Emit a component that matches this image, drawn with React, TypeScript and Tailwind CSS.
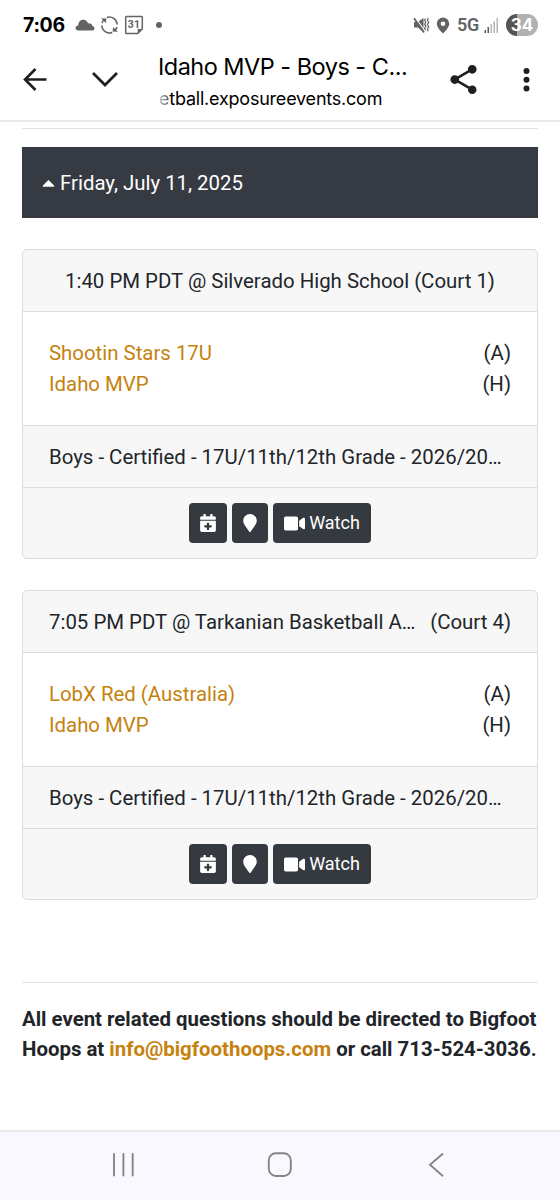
import type { ReactNode } from 'react';
import { FaCalendarPlus, FaCaretUp, FaMapMarker, FaVideo } from 'react-icons/fa';
import { MdShare } from 'react-icons/md';

type Game = {
    venue: string;
    court: string;
    away: string;
    home: string;
    centered?: boolean;
};

const division = 'Boys - Certified - 17U/11th/12th Grade - 2026/20…';

const games: Game[] = [
    {
        venue: '1:40 PM PDT @ Silverado High School',
        court: '(Court 1)',
        away: 'Shootin Stars 17U',
        home: 'Idaho MVP',
        centered: true,
    },
    {
        venue: '7:05 PM PDT @ Tarkanian Basketball A…',
        court: '(Court 4)',
        away: 'LobX Red (Australia)',
        home: 'Idaho MVP',
    },
];

function StatusBar() {
    return (
        <div className="flex h-[50px] items-center justify-between pl-[23px] pr-[22px] text-[#636363]">
            <div className="flex items-center">
                <span className="w-[43px] whitespace-nowrap font-['Inter',sans-serif] text-[19.5px] font-bold tracking-[-0.3px] text-black">7:06</span>
                <svg className="ml-[9px]" width="20" height="12" viewBox="0 0 20 12" fill="currentColor">
                    <path d="M3.6 11.5C1.6 11.5.5 10.5.5 9c0-1.600 1.100-2.500 2.700-2.600C3.500 2.900 5.500.800 8.300.800c2.300 0 3.900 1.300 4.700 3.400 2.600-.400 4.100 1 4.300 2.900 1.300.200 2.200 1 2.200 2.200 0 1.400-1 2.200-2.400 2.200Z" />
                </svg>
                {/* Sync */}
                <svg className="ml-[5px]" width="19" height="20" viewBox="0 0 19 20" fill="none" stroke="currentColor" strokeWidth="1.500">
                    <path d="M6.800 2.500A7.800 7.800 0 0 1 17.200 9.500M1.800 10.500A7.800 7.800 0 0 0 12.200 17.500M2 8A7.800 7.800 0 0 1 4.300 4.200M17 12A7.800 7.800 0 0 1 14.700 15.800" />
                    <path d="M1.200 3.300 6.500 3.600 5.800 8ZM17.800 16.700l-5.300-.3.700-4.400Z" fill="currentColor" stroke="none" />
                </svg>
                <svg className="ml-[5px]" width="20" height="20" viewBox="0 0 20 20" fill="none" stroke="currentColor" strokeWidth="1.500">
                    <path d="M2.500 1.500h15a.8.8 0 0 1 .8.8v11.700l-4.600 4.500H2.500a.8.8 0 0 1-.8-.8V2.300a.8.8 0 0 1 .8-.8Z" />
                    <path d="M13.700 18.500V14h4.600Z" fill="currentColor" stroke="none" />
                    <text x="9.900" y="13.300" textAnchor="middle" fontFamily="Roboto, sans-serif" fontSize="10.500" fontWeight="700" fill="currentColor" stroke="none">31</text>
                </svg>
                <span className="ml-[12px] size-[6px] rounded-full bg-[#636363]" />
            </div>
            <div className="flex items-center">
                <svg width="17" height="18" viewBox="0 0 17 18" fill="none" stroke="currentColor" strokeWidth="1.200">
                    <path d="M1 6h3.800L10.500 2v14L4.800 11.500H1Z" fill="currentColor" stroke="none" />
                    <path d="M2.200 1.500 12 15" stroke="white" strokeWidth="1.200" />
                    <path d="M1 2.200 11 16.500" strokeWidth="1.800" />
                    <path d="m12.500 2.500-.9 1.700 1.300 2-1.300 2 1.300 2-1.300 2 .9 2M15.300 2l-.9 2 1.300 2.300-1.300 2.300 1.300 2.300-1.300 2.300.9 2" />
                </svg>
                <svg className="ml-[6px]" width="14" height="17" viewBox="0 0 14 17" fill="currentColor">
                    <path fillRule="evenodd" d="M7 .5a6.200 6.200 0 0 1 6.200 6.200C13.200 11 7 16.500 7 16.500S.8 11 .8 6.700A6.200 6.200 0 0 1 7 .5Zm0 4a2.300 2.300 0 1 0 0 4.600 2.300 2.300 0 0 0 0-4.600Z" />
                </svg>
                <span className="ml-[7px] font-['Roboto',sans-serif] text-[18px] font-semibold leading-none tracking-[-0.3px]">5G</span>
                <svg className="ml-[5px]" width="15" height="15" viewBox="0 0 15 15" fill="#b5b5b5">
                    <path d="M.5 12h1.500v3H.5ZM3.500 9H5v6H3.500Z" fill="#555" />
                    <path d="M6.500 6H8v9H6.500ZM9.500 3.500H11V15H9.500ZM12.500 0H14v15h-1.500Z" />
                </svg>
                <span className="ml-[7px] flex h-[22px] w-[32px] items-center justify-center rounded-full bg-linear-to-r from-[#555] from-34% to-[#b1b1b1] to-34% font-['Inter',sans-serif] text-[17px] font-bold leading-none text-white">34</span>
            </div>
        </div>
    );
}

function BrowserBar() {
    return (
        <header className="flex h-[72px] border-b-2 border-[#e7e7ec] pl-[23px] text-[#1f1f1f]">
            <svg className="mt-[17px]" width="25" height="25" viewBox="0 0 25 25" fill="none" stroke="currentColor" strokeWidth="2.600">
                <path d="M23.500 12.500H2.500M12.500 2 2 12.500 12.500 23" />
            </svg>
            <svg className="ml-[43px] mt-[21px]" width="28" height="18" viewBox="0 0 28 18" fill="none" stroke="currentColor" strokeWidth="2.800">
                <path d="m2 2 12 12L26 2" />
            </svg>
            <div className="ml-[39px] w-[261px] font-['Inter',sans-serif] text-black">
                <div className="mt-px h-[31px] whitespace-nowrap text-[23.5px] leading-[31px] tracking-[-0.52px]">Idaho MVP - Boys - C...</div>
                <div className="mt-[4px] whitespace-nowrap pl-px text-[18px] leading-[26px] tracking-[-0.22px]">
                    <span className="bg-linear-to-r from-[#ccc] to-[#555] bg-clip-text text-transparent">e</span>tball.exposureevents.com
                </div>
            </div>
            <MdShare className="ml-[27px] mt-[12px] size-[35px]" />
            <svg className="ml-[41px] mt-[17px]" width="8" height="26" viewBox="0 0 8 26" fill="currentColor">
                <circle cx="4.500" cy="4" r="3" />
                <circle cx="4.500" cy="12.800" r="3" />
                <circle cx="4.500" cy="21.500" r="3" />
            </svg>
        </header>
    );
}

function DarkButton({ className, children }: { className: string; children: ReactNode }) {
    return (
        <button className={`flex h-10 items-center justify-center rounded-[4px] bg-[#343a40] text-[18px] text-white ${className}`}>
            {children}
        </button>
    );
}

function GameCard({ game }: { game: Game }) {
    return (
        <section className="flex h-[310px] flex-col overflow-hidden rounded-[5px] border border-[#dcdcdc] bg-[#f7f7f7]">
            <div className={`flex h-[62px] items-center border-b border-[#dcdcdc] px-[26px] pt-[2px] whitespace-nowrap ${game.centered ? 'justify-center gap-[5px]' : 'justify-between'}`}>
                <span>{game.venue}</span>
                <span>{game.court}</span>
            </div>
            <div className="h-[114px] border-b border-[#dcdcdc] bg-white px-[26px] pt-[26px]">
                <div className="flex justify-between">
                    <a className="text-[#c5820e]">{game.away}</a>
                    <span>(A)</span>
                </div>
                <div className="flex justify-between">
                    <a className="text-[#c5820e]">{game.home}</a>
                    <span>(H)</span>
                </div>
            </div>
            <div className="flex h-[62px] items-center whitespace-nowrap border-b border-[#dcdcdc] px-[26px] pt-[2px]">{division}</div>
            <div className="flex justify-center gap-[5px] pt-[15px]">
                <DarkButton className="w-[38px]">
                    <FaCalendarPlus />
                </DarkButton>
                <DarkButton className="w-[36px]">
                    <FaMapMarker />
                </DarkButton>
                <DarkButton className="w-[98px] gap-[4px]">
                    <FaVideo className="size-[21px]" />
                    Watch
                </DarkButton>
            </div>
        </section>
    );
}

function NavBar() {
    return (
        <nav className="flex h-[70px] border-t-2 border-[#e8e8ec] bg-[#f8f8fe] pt-[19px] text-[#858589]">
            <svg className="ml-[112px]" width="23" height="26" viewBox="0 0 23 26" stroke="currentColor" strokeWidth="1.900" strokeLinecap="round">
                <path d="M2 3v21.500M11.400 3v21.500M20.700 3v21.500" />
            </svg>
            <svg className="ml-[132px]" width="26" height="26" viewBox="0 0 26 26" fill="none" stroke="currentColor" strokeWidth="1.900">
                <rect x="1.800" y="2.300" width="22" height="22.700" rx="7" />
            </svg>
            <svg className="ml-[135px]" width="17" height="26" viewBox="0 0 17 26" fill="none" stroke="currentColor" strokeWidth="1.900" strokeLinecap="round">
                <path d="M14.500 3 2 13.700l12.500 11" />
            </svg>
        </nav>
    );
}

export default function App() {
    return (
        <div className="flex h-[1200px] w-[560px] flex-col overflow-hidden bg-white font-['Roboto',sans-serif] text-[20.4px] leading-[30.8px] text-[#212529]">
            <StatusBar />
            <BrowserBar />

            <main className="flex-1 px-[22px] pt-[6px]">
                <hr className="border-[#e2e2e2]" />
                <div className="mt-[18px] flex h-[71px] items-center bg-[#363a42] pl-[20px] pt-px text-white">
                    <FaCaretUp className="mr-[5px] h-[20px] w-[13px]" />
                    Friday, July 11, 2025
                </div>
                <div className="mt-[31px] flex flex-col gap-[31px]">
                    {games.map((game) => (
                        <GameCard key={game.court} game={game} />
                    ))}
                </div>
                <hr className="mt-[82px] border-[#e2e2e2]" />
                <p className="mt-[20.5px] whitespace-nowrap font-bold">
                    All event related questions should be directed to Bigfoot
                    <br />
                    Hoops at <a className="text-[#c5820e]">info@bigfoothoops.com</a> or call 713-524-3036.
                </p>
            </main>

            <NavBar />
        </div>
    );
}
